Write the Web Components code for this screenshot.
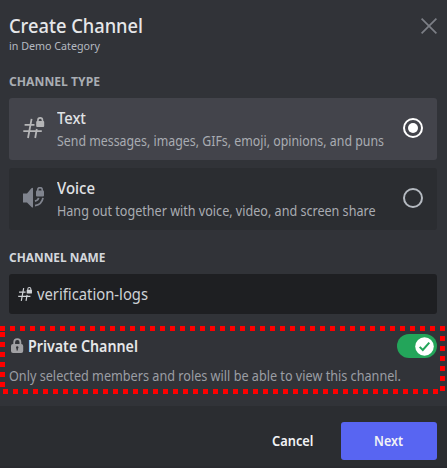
<!DOCTYPE html>
<html lang="en">
<head>
<meta charset="utf-8">
<title>Create Channel</title>
<style>
html, body { margin: 0; background: #313338; }
body { font-family: "Noto Sans", "Open Sans", sans-serif; width: 447px; height: 468px; overflow: hidden; }
</style>
</head>
<body>
<create-channel></create-channel>
<script>
const define = (name, html, setup) => {
  const template = document.createElement('template');
  template.innerHTML = html;
  customElements.define(name, class extends HTMLElement {
    constructor() {
      super();
      this.attachShadow({ mode: 'open' }).append(template.content.cloneNode(true));
    }
    connectedCallback() { if (setup) setup(this, this.shadowRoot); }
  });
};

// A single line of text condensed to the width given in "w".
define('fit-text', `
<style>
:host { display: block; white-space: nowrap; }
span { display: inline-block; transform-origin: 0 50%; }
</style><span><slot></slot></span>`, (host, root) => {
  const span = root.querySelector('span');
  const target = Number(host.getAttribute('w'));
  host.style.width = target + 'px';
  const natural = span.getBoundingClientRect().width;
  if (natural) span.style.transform = 'scaleX(' + target / natural + ')';
});

const icons = {
  hash: `<svg width="22" height="22" viewBox="0 0 22 22" fill="none" stroke="currentColor" stroke-width="1.8"><path d="M8.600 1.800 5 21M13.800 12 12.200 21M1.600 7.900H11.500M.3 14.200H18.800"/><path fill="currentColor" stroke="none" d="M14.200 4h6q1 0 1 1v4q0 1-1 1h-6q-1 0-1-1V5q0-1 1-1Z"/><path stroke-width="1.6" d="M14.900 5V3.200a2.300 2.300 0 0 1 4.600 0V5"/></svg>`,
  speaker: `<svg width="22" height="22" viewBox="0 0 22 22" fill="currentColor"><path d="M0 6.500h4l4.400-5.200Q10 .1 10 1.500v18.400q0 1.300-1.500.1L4 15.500H0Z"/><rect x="13" y="3.600" width="8" height="6" rx="1"/><path fill="none" stroke="currentColor" stroke-width="1.600" d="M14.700 5V2.900a2.300 2.300 0 0 1 4.600 0V5"/><path fill="none" stroke="currentColor" stroke-width="1.800" d="M12 14.200q3-.8 3.600-3.300M12 18.600q6.800-1 8-7.700"/></svg>`,
  lock: `<svg width="14" height="17" viewBox="0 0 14 17"><path fill="none" stroke="currentColor" stroke-width="1.8" d="M3.200 8V4.200a3.100 3.100 0 0 1 6.200 0V8"/><rect x="0" y="6" width="12.200" height="9" rx="2" fill="currentColor"/><circle cx="6.200" cy="9.500" r="1.200" fill="#313338"/><path d="M6.200 9.500v3" stroke="#313338" stroke-width="1.300"/></svg>`,
  close: `<svg width="18" height="18" viewBox="0 0 18 18" fill="none" stroke="currentColor" stroke-width="1.700"><path d="m1.600 1.600 14.800 14.800M16.400 1.600 1.600 16.400"/></svg>`
};
define('ui-icon', `<style>:host{display:block;flex:none} svg{display:block}</style><div></div>`, (host, root) => {
  root.querySelector('div').innerHTML = icons[host.getAttribute('name')];
  const size = host.getAttribute('size');
  if (size) {
    const svg = root.querySelector('svg');
    svg.setAttribute('width', size);
    svg.setAttribute('height', size);
  }
});

define('channel-option', `
<style>
:host { display: flex; box-sizing: border-box; height: 62px; padding: 0 14px 2px; border-radius: 3px; background: #2b2d31; color: #80848e; align-items: center; }
:host([checked]) { background: #43444b; color: #b5b5b7; }
.text { flex: 1; margin-left: 12px; padding-top: 2px; }
.name { height: 23px; font: 500 15.500px/22px "Noto Sans", sans-serif; color: #e0e2e5; }
.desc { height: 22px; font-size: 13.500px; line-height: 22px; color: #a9acb2; }
i { box-sizing: border-box; width: 20px; height: 20px; border: 2px solid #b5bac1; border-radius: 50%; display: grid; place-items: center; }
:host([checked]) i { border-color: #fff; }
:host([checked]) i::after { content: ""; width: 10px; height: 10px; border-radius: 50%; background: #fff; }
</style>
<slot name="icon"></slot>
<div class="text"><div class="name"><slot name="name"></slot></div><div class="desc"><slot></slot></div></div>
<i></i>`);

define('toggle-switch', `
<style>
:host { display: flex; width: 40px; height: 24px; border-radius: 12px; background: #23a55a; align-items: center; justify-content: flex-end; padding-right: 3px; box-sizing: border-box; }
svg { display: block; }
</style>
<svg width="19" height="19" viewBox="0 0 19 19"><circle cx="9.500" cy="9.500" r="9.300" fill="#fff"/><path d="m4.700 9.900 3.100 3.100 6.500-7.300" fill="none" stroke="#23a55a" stroke-width="2"/></svg>`);

define('dotted-frame', `
<style>
:host { display: block; position: relative; height: 68px; width: 447px; }
svg { position: absolute; left: 0; top: 0; }
</style>
<slot></slot>
<svg width="447" height="68" fill="none" stroke="#f00" stroke-width="5" stroke-dasharray="5" shape-rendering="crispEdges"><path d="M0 2.500H445M2.500 6V61M3 65.500H438M442.500 10V65"/></svg>`);

define('create-channel', `
<style>
:host { display: flex; flex-direction: column; width: 447px; height: 468px; background: #313338; }
header { display: flex; justify-content: space-between; height: 72px; padding: 15px 9px 0; box-sizing: border-box; }
header ui-icon { color: #7c7f86; margin-top: 2px; }
.title { font: 500 19.500px/22px "Noto Sans", sans-serif; color: #e6e7e9; }
.sub { margin-top: 2px; font-size: 11.500px; line-height: 14px; color: #b5bac1; }
.label { font-size: 11.500px; font-weight: 700; line-height: 20px; height: 26px; padding: 0 9px; color: #a9adb3; }
.name-label { color: #d4d7dc; margin-top: 18px; }
.options { display: grid; gap: 8px; padding: 0 10px 0 9px; }
.input { display: flex; align-items: center; box-sizing: border-box; height: 40px; margin: 0 10px 12px 9px; padding-left: 9px; border-radius: 3px; background: #1e1f22; color: #cfd2d6; font-size: 15.500px; gap: 4px; }
.private { display: flex; align-items: center; padding: 8px 10px 0 11px; height: 24px; color: #a1a1a4; }
.private fit-text { margin-left: 3px; font: 600 15.500px/24px "Noto Sans", sans-serif; color: #e6e7e9; }
toggle-switch { margin-left: auto; }
.note { padding: 7px 9px 0; font-size: 13.500px; line-height: 22px; color: #9b9ea4; }
footer { display: flex; justify-content: flex-end; align-items: flex-start; box-sizing: border-box; height: 62px; margin-top: auto; padding: 16px 10px 0; background: #2b2d31; font: 600 13.500px/38px "Noto Sans", sans-serif; color: #f2f3f5; border-bottom: 2px solid #292a2f; }
.next { display: flex; justify-content: center; box-sizing: border-box; padding-right: 1px; width: 96px; height: 38px; margin-left: 28px; border-radius: 3px; background: #5865f2; }
</style>
<header><div><fit-text class="title" w="134">Create Channel</fit-text><fit-text class="sub" w="91">in Demo Category</fit-text></div><ui-icon name="close"></ui-icon></header>
<div class="label"><fit-text w="91">CHANNEL TYPE</fit-text></div>
<div class="options">
<channel-option checked><ui-icon slot="icon" name="hash"></ui-icon><fit-text slot="name" w="29">Text</fit-text><fit-text w="327">Send messages, images, GIFs, emoji, opinions, and puns</fit-text></channel-option>
<channel-option><ui-icon slot="icon" name="speaker"></ui-icon><fit-text slot="name" w="38">Voice</fit-text><fit-text w="318.500">Hang out together with voice, video, and screen share</fit-text></channel-option>
</div>
<div class="label name-label"><fit-text w="96.500">CHANNEL NAME</fit-text></div>
<div class="input"><ui-icon name="hash" size="14.500"></ui-icon><fit-text w="111">verification-logs</fit-text></div>
<dotted-frame>
<div class="private"><ui-icon name="lock"></ui-icon><fit-text w="110">Private Channel</fit-text><toggle-switch></toggle-switch></div>
<div class="note"><fit-text w="392">Only selected members and roles will be able to view this channel.</fit-text></div>
</dotted-frame>
<footer><fit-text w="41.500">Cancel</fit-text><div class="next"><fit-text w="29">Next</fit-text></div></footer>`);
</script>
</body>
</html>
